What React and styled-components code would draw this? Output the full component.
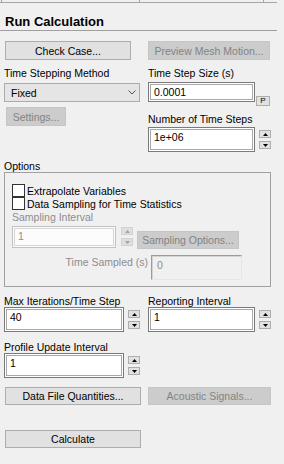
import React from "react";
import styled, { createGlobalStyle } from "styled-components";

const Global = createGlobalStyle`
  html, body { margin: 0; padding: 0; background: #f0f0f0; }
  * { box-sizing: border-box; }
`;

const Page = styled.div`
  width: 284px;
  height: 464px;
  overflow: hidden;
  background: #f0f0f0;
  font-family: "Liberation Sans", Arial, sans-serif;
  font-size: 10.5px;
  color: #000;
`;

const TopStrip = styled.div`
  display: flex;
  width: 277px;
  height: 3px;
  border-bottom: 1px solid #a6a6a6;
`;

const Tick = styled.div`
  width: ${(p) => p.$w}px;
  margin-left: ${(p) => p.$ml || 0}px;
  border-left: 1px solid #a6a6a6;
`;

const Header = styled.div`
  width: 277px;
  padding: 11px 0 0 5px;
  height: 28px;
  line-height: 16px;
  font-size: 13px;
  font-weight: bold;
  border-bottom: 1px solid #a0a0a0;
`;

const Content = styled.div`
  padding-left: 4px;
  display: flex;
  flex-direction: column;
  align-items: flex-start;
`;

const Grid = styled.div`
  display: grid;
  grid-template-columns: 144px 130px;
  align-items: start;
  margin-top: ${(p) => p.$mt || 0}px;
`;

const Col = styled.div`
  display: flex;
  flex-direction: column;
  align-items: flex-start;
`;

const Row = styled.div`
  display: flex;
  align-items: flex-start;
  margin-top: ${(p) => p.$mt || 0}px;
`;

const Label = styled.div`
  height: 12px;
  line-height: 12px;
  white-space: nowrap;
  margin-top: ${(p) => p.$mt || 0}px;
  color: ${(p) => (p.$disabled ? "#8d8d8d" : "#000")};
`;

const Button = styled.div`
  width: ${(p) => p.$w}px;
  height: ${(p) => p.$h || 18}px;
  margin-left: ${(p) => p.$ml || 0}px;
  margin-top: ${(p) => p.$mt || 0}px;
  display: flex;
  align-items: center;
  justify-content: center;
  white-space: nowrap;
  background: ${(p) => (p.$disabled ? "#cccccc" : "#e1e1e1")};
  border: 1px solid ${(p) => (p.$disabled ? "#c6c6c6" : "#adadad")};
  color: ${(p) => (p.$disabled ? "#838383" : "#000")};
`;

const Select = styled.div`
  width: 136px;
  height: 19px;
  display: flex;
  align-items: center;
  justify-content: space-between;
  padding: 0 3px 0 6px;
  background: #e5e5e5;
  border: 1px solid #acacac;
`;

const fieldLook = {
  normal: `
    background: #fff;
    border: 1px solid #7a7a7a;
    box-shadow: inset 0 0 0 1px #fff, inset 0 0 0 2px #a8a8a8;
    color: #000;
  `,
  disabled: `
    background: #fcfcfc;
    border: 1px solid #c2c2c2;
    box-shadow: inset 0 0 0 1px #fcfcfc, inset 0 0 0 2px #d6d6d6;
    color: #8d8d8d;
  `,
  sunken: `
    background: #f0f0f0;
    border: 1px solid;
    border-color: #9c9c9c #e6e6e6 #e6e6e6 #9c9c9c;
    box-shadow: inset 1px 1px 0 #d4d4d4;
    color: #8d8d8d;
  `,
};

const Field = styled.div`
  width: ${(p) => p.$w}px;
  height: ${(p) => p.$h || 25}px;
  margin-left: ${(p) => p.$ml || 0}px;
  padding: 3px 0 0 5px;
  line-height: 12px;
  white-space: nowrap;
  ${(p) => fieldLook[p.$look || "normal"]}
`;

const PButton = styled.div`
  width: 14px;
  height: 10px;
  margin: 14px 0 0 1px;
  display: flex;
  align-items: center;
  justify-content: center;
  font-size: 8px;
  line-height: 8px;
  background: #e1e1e1;
  border: 1px solid #adadad;
`;

const Spin = styled.div`
  display: flex;
  flex-direction: column;
  gap: 3px;
  margin-left: ${(p) => p.$ml || 4}px;
  margin-top: ${(p) => p.$mt ?? 3}px;
`;

const SpinBtn = styled.div`
  width: 12px;
  height: 8px;
  display: flex;
  align-items: center;
  justify-content: center;
  background: ${(p) => (p.$disabled ? "#dedede" : "#e1e1e1")};
  border: 1px solid ${(p) => (p.$disabled ? "#d2d2d2" : "#adadad")};
`;

const Group = styled.div`
  width: 267px;
  border: 1px solid #a0a0a0;
  padding: 11px 0 6px 7px;
  display: flex;
  flex-direction: column;
  align-items: flex-start;
`;

const CheckRow = styled.div`
  display: flex;
  align-items: center;
  gap: 2px;
  height: 13px;
  line-height: 12px;
  white-space: nowrap;
`;

const Box = styled.div`
  width: 13px;
  height: 13px;
  background: #fff;
  border: 1px solid #333;
`;

const RightLabel = styled.div`
  width: 136px;
  text-align: right;
  padding-top: 1px;
  line-height: 12px;
  white-space: nowrap;
  color: #8d8d8d;
`;

const Tri = ({ down, color }) => (
  <svg width="5" height="3" viewBox="0 0 5 3">
    <polygon
      points={down ? "0,0 5,0 2.5,3" : "0,3 5,3 2.5,0"}
      fill={color}
    />
  </svg>
);

const Spinner = ({ disabled, ml, mt }) => {
  const c = disabled ? "#a3a3a3" : "#000";
  return (
    <Spin $ml={ml} $mt={mt}>
      <SpinBtn $disabled={disabled}>
        <Tri color={c} />
      </SpinBtn>
      <SpinBtn $disabled={disabled}>
        <Tri down color={c} />
      </SpinBtn>
    </Spin>
  );
};

export default function App() {
  return (
    <Page>
      <Global />
      <TopStrip>
        <Tick $ml={1} $w={138} />
        <Tick $w={124} />
        <Tick $w={14} />
      </TopStrip>
      <Header>Run Calculation</Header>
      <Content>
        <Grid $mt={10}>
          <Button $w={126} $h={19} $ml={1}>
            Check Case...
          </Button>
          <Button $w={122} $h={19} $disabled>
            Preview Mesh Motion...
          </Button>
        </Grid>

        <Grid>
          <Col>
            <Label $mt={7}>Time Stepping Method</Label>
            <Row $mt={4}>
              <Select>
                <span>Fixed</span>
                <svg width="8" height="5" viewBox="0 0 8 5">
                  <polyline
                    points="0.5,0.5 4,4 7.5,0.5"
                    fill="none"
                    stroke="#555"
                    strokeWidth="1"
                  />
                </svg>
              </Select>
            </Row>
            <Button $w={60} $h={19} $ml={2} $mt={5} $disabled>
              Settings...
            </Button>
          </Col>
          <Col>
            <Label $mt={7}>Time Step Size (s)</Label>
            <Row $mt={3}>
              <Field $w={107} $h={20}>0.0001</Field>
              <PButton>P</PButton>
            </Row>
            <Label $mt={7}>Number of Time Steps</Label>
            <Row $mt={2}>
              <Field $w={107}>1e+06</Field>
              <Spinner />
            </Row>
          </Col>
        </Grid>

        <Label $mt={8}>Options</Label>
        <Group>
          <CheckRow>
            <Box />
            <span>Extrapolate Variables</span>
          </CheckRow>
          <CheckRow>
            <Box />
            <span>Data Sampling for Time Statistics</span>
          </CheckRow>
          <Label $mt={1} $disabled>
            Sampling Interval
          </Label>
          <Row $mt={3}>
            <Field $w={104} $h={22} $look="disabled">
              1
            </Field>
            <Spinner disabled ml={5} mt={1} />
            <Button $w={102} $h={18} $ml={4} $mt={5} $disabled>
              Sampling Options...
            </Button>
          </Row>
          <Row $mt={6}>
            <RightLabel>Time Sampled (s)</RightLabel>
            <Field $w={91} $ml={3} $look="sunken">
              0
            </Field>
          </Row>
        </Group>

        <Grid $mt={8}>
          <Col>
            <Label>Max Iterations/Time Step</Label>
            <Row>
              <Field $w={120}>40</Field>
              <Spinner />
            </Row>
            <Label $mt={9}>Profile Update Interval</Label>
            <Row>
              <Field $w={120}>1</Field>
              <Spinner />
            </Row>
          </Col>
          <Col>
            <Label>Reporting Interval</Label>
            <Row>
              <Field $w={107}>1</Field>
              <Spinner />
            </Row>
          </Col>
        </Grid>

        <Grid $mt={9}>
          <Button $w={136} $ml={1}>
            Data File Quantities...
          </Button>
          <Button $w={123} $disabled>
            Acoustic Signals...
          </Button>
        </Grid>

        <Button $w={136} $ml={1} $mt={25}>
          Calculate
        </Button>
      </Content>
    </Page>
  );
}
